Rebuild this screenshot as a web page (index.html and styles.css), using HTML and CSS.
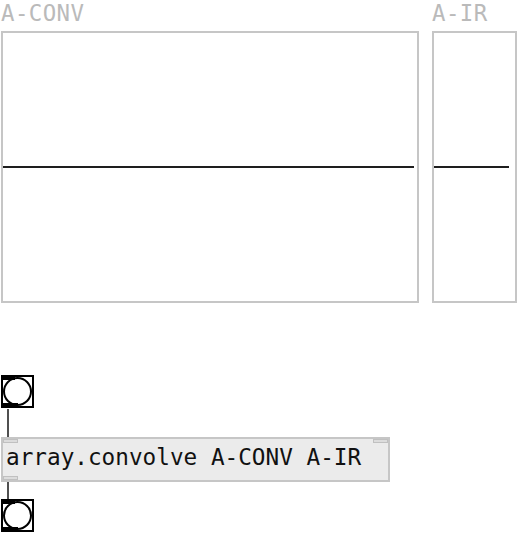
FILE: index.html
```html
<!DOCTYPE html>
<html>
<head>
<meta charset="utf-8">
<link rel="stylesheet" href="styles.css">
</head>
<body>
<div class="canvas">
  <div class="label label-conv">A-CONV</div>
  <div class="graph graph-conv"><div class="trace"></div></div>
  <div class="label label-ir">A-IR</div>
  <div class="graph graph-ir"><div class="trace"></div></div>

  <div class="bang bang-top">
    <span class="circle"></span>
    <span class="port port-in"></span>
    <span class="port port-out"></span>
  </div>
  <div class="wire wire-1"></div>
  <div class="obj">
    <span class="tab tab-in-l"></span>
    <span class="tab tab-in-r"></span>
    <span class="obj-text">array.convolve A-CONV A-IR</span>
    <span class="tab tab-out-l"></span>
  </div>
  <div class="wire wire-2"></div>
  <div class="bang bang-bottom">
    <span class="circle"></span>
    <span class="port port-in"></span>
    <span class="port port-out"></span>
  </div>
</div>
</body>
</html>
```

FILE: styles.css
```css
html, body {
  margin: 0;
  padding: 0;
  background: #fff;
}
.canvas {
  position: relative;
  width: 520px;
  height: 536px;
  overflow: hidden;
  font-family: "DejaVu Sans Mono", "Liberation Mono", monospace;
}
.label {
  position: absolute;
  top: 0;
  font-size: 22.4px;
  line-height: 26px;
  color: #bababa;
  letter-spacing: 0.4px;
}
.label-conv { left: 1px; }
.label-ir { left: 432px; }

.graph {
  position: absolute;
  top: 31px;
  height: 268px;
  border: 2px solid #c6c6c6;
  background: #fff;
}
.graph-conv { left: 1px; width: 414px; }
.graph-ir { left: 432px; width: 81px; }
.trace {
  position: absolute;
  top: 133px;
  left: 0;
  height: 2px;
  background: #1e1e1e;
}
.graph-conv .trace { width: 411px; }
.graph-ir .trace { width: 75px; }

.bang {
  position: absolute;
  left: 1px;
  width: 29px;
  height: 29px;
  border: 2px solid #000;
  background: #fff;
}
.bang-top { top: 375px; }
.bang-bottom { top: 499px; }
.port {
  position: absolute;
  left: 0;
  height: 3px;
  background: #000;
}
.port-in { top: 0; width: 12px; }
.port-out { bottom: 0; width: 15px; }
.circle {
  position: absolute;
  left: 0;
  top: 0;
  width: 25px;
  height: 25px;
  border: 2px solid #000;
  border-radius: 50%;
  background: #fff;
}

.wire {
  position: absolute;
  left: 7px;
  width: 2px;
  background: #505050;
}
.wire-1 { top: 409px; height: 28px; }
.wire-2 { top: 482px; height: 17px; }

.obj {
  position: absolute;
  left: 1px;
  top: 437px;
  width: 385px;
  height: 41px;
  border: 2px solid #c6c6c6;
  background: #ebebeb;
}
.obj-text {
  position: absolute;
  left: 3px;
  top: 7px;
  font-size: 22.7px;
  line-height: 1;
  color: #111;
  white-space: pre;
}
.tab {
  position: absolute;
  width: 13px;
  height: 2px;
  border: 1px solid #c0c0c0;
  background: #dcdcdc;
}
.tab-in-l { left: 0; top: 0; }
.tab-in-r { right: 0; top: 0; }
.tab-out-l { left: 0; bottom: 0; }
```
